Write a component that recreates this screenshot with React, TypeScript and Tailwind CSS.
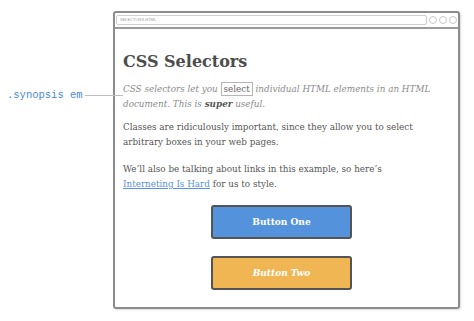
export default function App() {
  return (
    <div className="relative w-[474px] h-[321px] overflow-hidden bg-white font-['DejaVu_Serif',serif]">
      {/* annotation */}
      <div className="absolute left-[7px] top-[88px] font-['Liberation_Mono',monospace] text-[10.5px] leading-[14px] text-[#4a8ad4]">
        .synopsis em
      </div>
      <div className="absolute left-[85px] top-[95px] h-px w-[38px] bg-[#bdbdbd]" />

      {/* browser window */}
      <div className="ml-[113px] mt-[11px] flex h-[298px] w-[347px] flex-col rounded-[3px] border-2 border-[#8c8c8c] shadow-[1px_1px_2px_rgba(0,0,0,0.15)]">
        <div className="flex h-[16px] items-center gap-[2px] border-b-2 border-[#9a9a9a] px-[1px]">
          <div className="flex h-[10px] flex-1 items-center rounded-[2px] border border-[#cfcfcf] pl-[3px] font-['Liberation_Sans',sans-serif] text-[4px] leading-none text-[#9a9a9a]">
            SELECTORS.HTML
          </div>
          <div className="h-[8px] w-[8px] rounded-full border border-[#c8c8c8]" />
          <div className="h-[8px] w-[8px] rounded-full border border-[#c8c8c8]" />
          <div className="h-[8px] w-[8px] rounded-full border border-[#c8c8c8]" />
        </div>

        <div className="flex flex-col pl-[8px] pr-[25px] pt-[23px] text-[8.8px] leading-[15px] text-[#555]">
          <h1 className="text-[16px] font-bold leading-[20px] text-[#4d4d4d]">CSS Selectors</h1>
          <p className="mt-[10px] italic text-[#8a8a8a]">
            CSS selectors let you{' '}
            <span className="border border-[#b5b5b5] px-[2px] py-[1px] not-italic text-[#666]">select</span>{' '}
            individual HTML elements in an HTML document. This is{' '}
            <b className="text-[#555]">super</b> useful.
          </p>
          <p className="mt-[8px]">
            Classes are ridiculously important, since they allow you to select arbitrary boxes in your web pages.
          </p>
          <p className="mt-[12px]">
            We’ll also be talking about links in this example, so here’s{' '}
            <a className="text-[#5a93d6] underline">Interneting Is Hard</a> for us to style.
          </p>

          <div className="ml-[88px] mt-[13px] flex h-[34px] w-[141px] items-center justify-center rounded-[3px] border-2 border-[#545454] bg-[#5592dc] text-[9px] font-bold text-white">
            Button One
          </div>
          <div className="ml-[88px] mt-[17px] flex h-[34px] w-[141px] items-center justify-center rounded-[3px] border-2 border-[#545454] bg-[#f0b654] text-[9px] font-bold italic text-white">
            Button Two
          </div>
        </div>
      </div>
    </div>
  );
}
